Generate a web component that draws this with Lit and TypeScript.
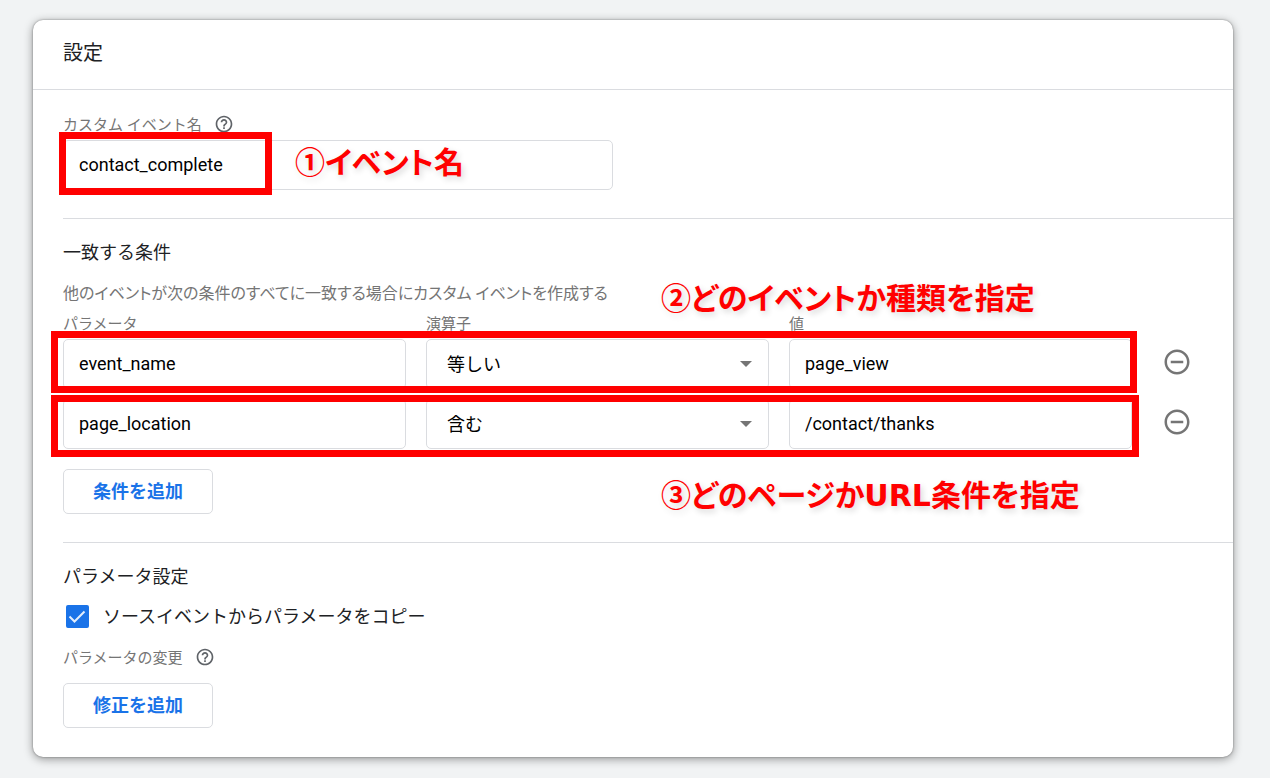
import { LitElement, html, css } from "lit";
import { customElement, state } from "lit/decorators.js";

interface Condition {
  parameter: string;
  operator: string;
  value: string;
}

const OPERATORS = ["等しい", "含む"];

const helpIcon = html`<svg viewBox="0 0 24 24" width="20" height="20" aria-hidden="true">
  <path
    fill="currentColor"
    d="M11 18h2v-2h-2v2zm1-16C6.48 2 2 6.48 2 12s4.48 10 10 10 10-4.48 10-10S17.52 2 12 2zm0 18c-4.41 0-8-3.59-8-8s3.59-8 8-8 8 3.59 8 8-3.59 8-8 8zm0-14c-2.21 0-4 1.79-4 4h2c0-1.1.9-2 2-2s2 .9 2 2c0 2-3 1.75-3 5h2c0-2.25 3-2.5 3-5 0-2.21-1.79-4-4-4z"
  />
</svg>`;

const removeIcon = html`<svg viewBox="0 0 24 24" width="30" height="30" aria-hidden="true">
  <path
    fill="currentColor"
    d="M7 11v2h10v-2H7zm5-9C6.48 2 2 6.48 2 12s4.48 10 10 10 10-4.48 10-10S17.52 2 12 2zm0 18c-4.41 0-8-3.59-8-8s3.59-8 8-8 8 3.59 8 8-3.59 8-8 8z"
  />
</svg>`;

@customElement("app-root")
export class AppRoot extends LitElement {
  static styles = css`
    :host {
      display: block;
      box-sizing: border-box;
      min-height: 100vh;
      padding: 20px 37px 21px 33px;
      background: #f1f3f4;
      color: #202124;
      font-family: Roboto, "Noto Sans CJK JP", sans-serif;
      font-size: 18px;
      line-height: 28px;
    }
    *,
    *::before {
      box-sizing: border-box;
    }
    .card {
      padding-bottom: 1px;
      background: #fff;
      border-radius: 10px;
      box-shadow: 0 0 2px rgba(0, 0, 0, 0.4), 0 2px 10px rgba(0, 0, 0, 0.4);
    }
    .header {
      padding: 18px 30px 21px;
      border-bottom: 1px solid #dadce0;
    }
    .title {
      margin: 0;
      font-size: 20px;
      line-height: 30px;
      font-weight: 400;
    }
    .body {
      padding-left: 30px;
    }
    .section {
      padding: 20px 31px 28px 0;
    }
    .section + .section {
      border-top: 1px solid #dadce0;
    }
    .heading {
      margin: 0 0 12px;
      font-size: 18px;
      line-height: 28px;
      font-weight: 400;
    }
    .hint,
    .label {
      margin: 0;
      color: #757575;
      font-size: 15px;
      line-height: 30px;
    }
    .hint {
      font-size: 16px;
      font-feature-settings: "palt";
    }
    .label-row {
      display: flex;
      align-items: center;
      gap: 12px;
    }
    .help {
      display: flex;
      padding: 0 0 2px;
      border: 0;
      background: none;
      color: #5f6368;
    }
    .input,
    .select {
      width: 100%;
      height: 50px;
      margin: 0;
      padding: 0 15px 2px;
      border: 1px solid #dadce0;
      border-radius: 5px;
      background: #fff;
      color: #000;
      font: inherit;
      appearance: none;
    }
    .name-field {
      position: relative;
      width: 550px;
      max-width: 100%;
    }
    .name-field .input {
      display: block;
    }
    .grid {
      position: relative;
      display: grid;
      grid-template-columns: repeat(3, minmax(0, 1fr)) 50px;
      column-gap: 20px;
    }
    .rows {
      display: grid;
      gap: 10px;
    }
    .select-box {
      display: grid;
      align-items: center;
    }
    .select-box > * {
      grid-area: 1 / 1;
    }
    .select {
      padding: 2px 20px 0;
    }
    .arrow {
      justify-self: end;
      margin-right: 17px;
      color: #757575;
      pointer-events: none;
    }
    .remove {
      display: flex;
      align-items: center;
      justify-content: center;
      height: 46px;
      padding: 0;
      border: 0;
      background: none;
      color: #757575;
    }
    .button {
      display: block;
      height: 45px;
      padding: 0 29px;
      border: 1px solid #dadce0;
      border-radius: 5px;
      background: #fff;
      color: #1a73e8;
      font: inherit;
      font-weight: 700;
    }
    .rows + .button {
      margin-top: 20px;
    }
    .check {
      display: flex;
      align-items: center;
      gap: 14px;
      margin: 0 0 12px 3px;
    }
    .box {
      display: grid;
      padding-bottom: 2px;
    }
    .box > * {
      grid-area: 1 / 1;
    }
    .checkbox {
      width: 23px;
      height: 23px;
      margin: 0;
      border: 2px solid #757575;
      border-radius: 2px;
      appearance: none;
    }
    .checkbox:checked {
      border-color: #1a73e8;
      background: #1a73e8;
    }
    .tick {
      pointer-events: none;
    }
    .label-row + .button {
      margin-top: 10px;
    }
    .frame {
      position: absolute;
      border: 7px solid #f00;
      pointer-events: none;
    }
    .frame-name {
      inset: -8px auto -5px -4px;
      width: 213px;
    }
    .frame-first {
      grid-column: 1 / 4;
      inset: -8px -5px -4px -12px;
    }
    .frame-last {
      grid-column: 1 / 4;
      inset: -4px -7px -8px -12px;
    }
    .note {
      position: absolute;
      color: #f00;
      font-family: "Noto Sans CJK JP", sans-serif;
      font-size: 30px;
      line-height: 36px;
      font-weight: 700;
      font-feature-settings: "palt";
      white-space: nowrap;
      text-shadow: 2px 3px 6px rgba(0, 0, 0, 0.16);
      pointer-events: none;
    }
    .latin {
      font-family: "DejaVu Sans", sans-serif;
    }
    .note-name {
      left: 232px;
      top: 2px;
    }
    .note-event {
      left: 598px;
      bottom: 25px;
    }
    .note-page {
      left: 598px;
      top: 76px;
    }
  `;

  @state() private conditions: Condition[] = [
    { parameter: "event_name", operator: "等しい", value: "page_view" },
    { parameter: "page_location", operator: "含む", value: "/contact/thanks" },
  ];

  private renderCondition(c: Condition, i: number) {
    const last = i === this.conditions.length - 1;
    return html`<div class="grid">
      <input class="input" id="parameter-${i}" aria-label="パラメータ" .value=${c.parameter} />
      <div class="select-box">
        <select class="select" id="operator-${i}" aria-label="演算子">
          ${OPERATORS.map((o) => html`<option ?selected=${o === c.operator}>${o}</option>`)}
        </select>
        <svg class="arrow" viewBox="0 0 12 6" width="12" height="6" aria-hidden="true">
          <path fill="currentColor" d="M0 0h12L6 6z" />
        </svg>
      </div>
      <input class="input" id="value-${i}" aria-label="値" .value=${c.value} />
      <button class="remove" type="button" aria-label="削除">${removeIcon}</button>
      <div class="frame ${last ? "frame-last" : "frame-first"}"></div>
      ${last
        ? html`<div class="note note-page">③どのページか<span class="latin">URL</span>条件を指定</div>`
        : null}
    </div>`;
  }

  render() {
    return html`<main class="card">
      <header class="header"><h1 class="title">設定</h1></header>
      <div class="body">
        <section class="section">
          <div class="label-row">
            <label class="label" for="event">カスタム イベント名</label>
            <button class="help" type="button" aria-label="ヘルプ">${helpIcon}</button>
          </div>
          <div class="name-field">
            <input class="input" id="event" .value=${"contact_complete"} />
            <div class="frame frame-name"></div>
            <div class="note note-name">①イベント名</div>
          </div>
        </section>

        <section class="section">
          <h2 class="heading">一致する条件</h2>
          <p class="hint">他のイベントが次の条件のすべてに一致する場合にカスタム イベントを作成する</p>
          <div class="grid">
            <label class="label" for="parameter-0">パラメータ</label>
            <label class="label" for="operator-0">演算子</label>
            <label class="label" for="value-0">値</label>
            <div class="note note-event">②どのイベントか種類を指定</div>
          </div>
          <div class="rows">${this.conditions.map((c, i) => this.renderCondition(c, i))}</div>
          <button class="button" type="button">条件を追加</button>
        </section>

        <section class="section">
          <h2 class="heading">パラメータ設定</h2>
          <div class="check">
            <span class="box">
              <input class="checkbox" type="checkbox" id="copy" checked />
              <svg class="tick" viewBox="0 0 23 23" width="23" height="23" aria-hidden="true">
                <path d="M3.5 11.5l5 5L18.5 6.5" fill="none" stroke="#e3eefc" stroke-width="2" />
              </svg>
            </span>
            <label for="copy">ソースイベントからパラメータをコピー</label>
          </div>
          <div class="label-row">
            <span class="label">パラメータの変更</span>
            <button class="help" type="button" aria-label="ヘルプ">${helpIcon}</button>
          </div>
          <button class="button" type="button">修正を追加</button>
        </section>
      </div>
    </main>`;
  }
}
